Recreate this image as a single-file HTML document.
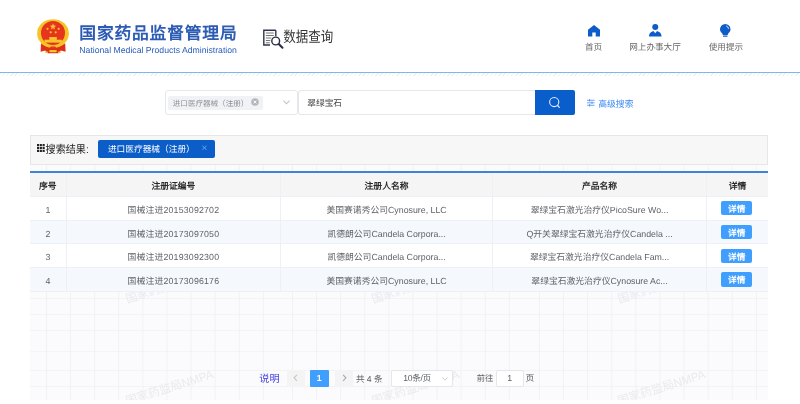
<!DOCTYPE html>
<html lang="zh-CN">
<head>
<meta charset="utf-8">
<title>数据查询</title>
<style>
*{box-sizing:border-box;margin:0;padding:0}
html,body{width:800px;height:404px;overflow:hidden;background:#fff}
body{font-family:"Liberation Sans",sans-serif;color:#606266;position:relative;will-change:transform;background:transparent;text-rendering:geometricPrecision;-webkit-font-smoothing:antialiased}
.abs{position:absolute}
.t{position:absolute;white-space:nowrap;line-height:1}
/* header */
#hline{left:0;top:71.7px;width:800px;height:1.6px;background:#86b3e6}
#hhatch{left:0;top:73.3px;width:800px;height:2.4px;background:repeating-linear-gradient(135deg,#edf0f5 0 1px,#fff 1px 3px)}
#title{left:79.3px;top:25.5px;font-size:16.8px;font-weight:bold;color:#2d5cb5;letter-spacing:.8px}
#sub{left:79.3px;top:46px;font-size:8.68px;color:#2a5cba}
#dq{left:283.3px;top:31.4px;font-size:12.5px;color:#333;transform:scaleY(1.2);transform-origin:0 50%}
.nav{font-size:8.6px;color:#666;text-align:center;transform:translateX(-50%)}
/* search */
#sel{left:164.7px;top:90.4px;width:133.1px;height:24.4px;border:1px solid #e6e7ec;border-radius:3px;background:#fff}
#seltag{left:168px;top:95.6px;width:94.5px;height:14.4px;background:#f1f2f5;border-radius:2px}
#seltxt{left:172.8px;top:99.5px;font-size:7.55px;color:#8e9196}
#inp{left:298.2px;top:90.4px;width:238px;height:24.4px;border:1px solid #e6e7ec;border-right:0;border-radius:3px 0 0 3px;background:#fff}
#inptxt{left:307.3px;top:98.5px;font-size:8.7px;color:#444}
#btn{left:535px;top:90.4px;width:39.8px;height:24.4px;background:#0a5ecb;border-radius:0 2px 2px 0}
#adv{left:598.2px;top:99.7px;font-size:8.85px;color:#3a88f5}
/* result bar */
#rbar{left:29.8px;top:134.7px;width:738.4px;height:30.7px;background:#f7f7f7;border:1px solid #e6e6e6}
#rlabel{left:45.6px;top:145.6px;font-size:10.1px;color:#222;transform:scaleY(1.08);transform-origin:0 50%}
#rtag{left:98.2px;top:139.6px;width:117.3px;height:18.5px;background:#0b5dc8;border-radius:2px}
#rtagtxt{left:107.9px;top:145px;font-size:8.7px;color:#fff}
#rtagx{left:201.4px;top:143.6px;font-size:10px;color:#62a5f7}
/* grid bg */
#grid{left:29.7px;top:165px;width:738.4px;height:235px;background-color:#fbfbfe;
background-image:linear-gradient(to bottom,transparent 132.5px,#f3f2f5 132.5px,#f3f2f5 133.5px,transparent 133.5px,transparent 148.8px,#f3f2f5 148.8px,#f3f2f5 149.8px,transparent 149.8px,transparent 165px,#f3f2f5 165px,#f3f2f5 166px,transparent 166px,transparent 186px,#f5f4f7 186px,#f5f4f7 187px,transparent 187px,transparent 204.700px,#f3f2f5 204.700px,#f3f2f5 205.700px,transparent 205.700px,transparent 221px,#f3f2f5 221px,#f3f2f5 222px,transparent 222px);overflow:hidden}
.vt{position:absolute;top:0;height:235px;width:218px;background-image:linear-gradient(to right,#f1f0f3 1px,transparent 1px);background-size:24.1px 100%}
.wm{position:absolute;white-space:nowrap;font-size:11.7px;color:#eaeaee;transform:rotate(-17.5deg);transform-origin:0 100%;line-height:1}
/* table */
#tblue{left:30px;top:171px;width:738px;height:2px;background:#3f83d8}
.row{position:absolute;left:29.7px;width:738.4px;height:23.8px;border-bottom:1px solid #eef0f6}
.cell{position:absolute;top:0;height:100%;text-align:center;font-size:8.8px;line-height:26.2px;white-space:nowrap;border-right:1px solid #eef0f6;color:#606266}
.c1{left:0;width:37.3px}.c2{left:37.3px;width:213.9px}.c3{left:251.2px;width:212.4px}.c4{left:463.6px;width:213.5px}.c5{left:677.1px;width:61.3px;border-right:0}
.row:not(.hd) .c2{letter-spacing:.18px}
.hd{background:#f5f5f5}
.hd .cell{font-weight:bold;color:#2a2a2a;line-height:26.3px;letter-spacing:0}
.odd{background:#fff}.even{background:#f5f8fd}
.dbtn{position:absolute;left:14.4px;top:4.2px;width:31px;height:14.5px;background:#409eff;border-radius:2px;color:#fff;font-size:8.7px;font-weight:bold;line-height:16.2px;text-align:center;letter-spacing:0}
/* pagination */
.pb{position:absolute;top:369.6px;height:17px;border-radius:1px}
</style>
</head>
<body>
<!-- header -->
<div class="abs" id="hline"></div>
<div class="abs" id="hhatch"></div>
<svg class="abs" id="emblem" style="left:36px;top:18px" width="34" height="37" viewBox="0 0 34 37">
  <path d="M5 25.500L4.600 33.800 9.300 32.600 11.500 35.200 22.500 35.200 24.700 32.600 29.600 33.800 29.200 25.500Z" fill="#df2e1b"/>
  <ellipse cx="17" cy="15.400" rx="15.900" ry="14.200" fill="#f6c426"/>
  <circle cx="17" cy="14.900" r="12" fill="#e6341d"/>
  <path d="M17 5.300l.9 2.300 2.400.1-1.900 1.500.7 2.400-2.100-1.400-2.100 1.400.7-2.400-1.900-1.500 2.400-.1z" fill="#f7c52b"/>
  <circle cx="11.500" cy="10.800" r="1.100" fill="#f7c52b"/><circle cx="22.700" cy="10.800" r="1.100" fill="#f7c52b"/>
  <circle cx="14.700" cy="14.300" r="1.100" fill="#f7c52b"/><circle cx="19.700" cy="14.300" r="1.100" fill="#f7c52b"/>
  <rect x="13.300" y="19" width="7.500" height="3.400" fill="#f7c52b"/>
  <rect x="8.400" y="21.700" width="17.500" height="2.900" fill="#f7c52b"/>
  <path d="M4.500 22.500Q17 32.500 29.500 22.500L28.500 26Q17 34 5.500 26Z" fill="#f6c426"/>
  <path d="M13.500 29.200Q17 27.400 20.500 29.200L20 30.600Q17 29.400 14 30.600Z" fill="#e2401c"/>
  <rect x="13.300" y="32" width="7.400" height="2.200" rx=".8" fill="#f6c426"/>
  <rect x="9" y="33.600" width="3" height="1.300" fill="#f6c426"/><rect x="22" y="33.600" width="3" height="1.300" fill="#f6c426"/>
</svg>
<div class="t" id="title">国家药品监督管理局</div>
<div class="t" id="sub">National Medical Products Administration</div>
<svg class="abs" style="left:262px;top:28px" width="23" height="22" viewBox="0 0 23 22">
  <path d="M13.800 2.200H1.800v14.800H8" fill="none" stroke="#33334d" stroke-width="1.400"/>
  <path d="M13.800 2.200v6" fill="none" stroke="#33334d" stroke-width="1.400"/>
  <path d="M3.800 5h8M3.800 7.500h8M3.800 10h5.500M3.800 12.500h4.500M3.800 14.800h4" stroke="#777" stroke-width="1"/>
  <circle cx="13.700" cy="13" r="3.900" fill="#fff" stroke="#2b2b45" stroke-width="1.400"/>
  <path d="M16.700 16L20.500 19.800" stroke="#2b2b45" stroke-width="2" stroke-linecap="round"/>
</svg>
<div class="t" id="dq">数据查询</div>
<!-- nav -->
<svg class="abs" style="left:587.5px;top:25px" width="12" height="11.500" viewBox="0 0 12 11.500"><path d="M6 0L0 4.800V11.500H4.300V7.500H7.700V11.500H12V4.800Z" fill="#0d5cc9"/></svg>
<svg class="abs" style="left:649.2px;top:24.300px" width="12.500" height="12.500" viewBox="0 0 12.500 12.500"><circle cx="6.250" cy="3" r="3" fill="#0d5cc9"/><path d="M0 12.500C0 8.500 3 7 6.250 7S12.500 8.500 12.500 12.500Z" fill="#0d5cc9"/><path d="M4.500 7L6.250 9.200 8 7Z" fill="#fff"/></svg>
<svg class="abs" style="left:720px;top:24px" width="10.500" height="13.500" viewBox="0 0 10.500 13.500"><path d="M5.250 0A5.250 5.250 0 0 0 0 5.250C0 7.300 1.200 8.600 2.300 9.600L2.800 11H7.700L8.200 9.600C9.300 8.600 10.500 7.300 10.500 5.250A5.250 5.250 0 0 0 5.250 0Z" fill="#0d5cc9"/><rect x="3" y="11.600" width="4.500" height="1.200" rx=".5" fill="#0d5cc9"/><path d="M6.500 2A3 3 0 0 1 8.500 4.500" fill="none" stroke="#fff" stroke-width=".8" stroke-linecap="round"/></svg>
<div class="t nav" style="left:593.5px;top:43.400px">首页</div>
<div class="t nav" style="left:655px;top:43.400px">网上办事大厅</div>
<div class="t nav" style="left:725.900px;top:43.400px">使用提示</div>
<!-- search -->
<div class="abs" id="sel"></div>
<div class="abs" id="seltag"></div>
<div class="t" id="seltxt">进口医疗器械（注册）</div>
<svg class="abs" style="left:251.400px;top:98px" width="8" height="8" viewBox="0 0 8 8"><circle cx="4" cy="4" r="3.800" fill="#b4b7bd"/><path d="M2.600 2.600l2.800 2.800M5.400 2.600L2.600 5.400" stroke="#fff" stroke-width=".9"/></svg>
<svg class="abs" style="left:283.200px;top:100.200px" width="7" height="4.500" viewBox="0 0 7 4.500"><path d="M.4.600L3.500 3.800 6.600.6" fill="none" stroke="#bfc3cb" stroke-width="1.100"/></svg>
<div class="abs" id="inp"></div>
<div class="t" id="inptxt">翠绿宝石</div>
<div class="abs" id="btn"></div>
<svg class="abs" style="left:547px;top:95px" width="15" height="15" viewBox="0 0 15 15"><circle cx="7.200" cy="7" r="4.600" fill="none" stroke="#eaf1ff" stroke-width="1.050"/><path d="M10.600 10.500L12.300 12.300" stroke="#eaf1ff" stroke-width="1.200" stroke-linecap="round"/></svg>
<svg class="abs" style="left:587.400px;top:99.300px" width="7.600" height="7.600" viewBox="0 0 7.600 7.600"><path d="M0 1.300h7.600M0 3.800h7.600M0 6.300h7.600" stroke="#4a93f5" stroke-width=".8"/><path d="M2.600 0v2.600M5 2.500v2.600M2.600 5v2.600" stroke="#4a93f5" stroke-width=".9"/></svg>
<div class="t" id="adv">高级搜索</div>
<!-- results bar -->
<div class="abs" id="grid">
  <div class="vt" style="left:16.600px"></div><div class="vt" style="left:262.800px"></div><div class="vt" style="left:508.900px"></div>
  <div class="wm" style="left:98.3px;top:129px">国家药监局NMPA</div>
  <div class="wm" style="left:344.8px;top:129px">国家药监局NMPA</div>
  <div class="wm" style="left:590.3px;top:129px">国家药监局NMPA</div>
  <div class="wm" style="left:98.3px;top:230.500px">国家药监局NMPA</div>
  <div class="wm" style="left:344.8px;top:230.500px">国家药监局NMPA</div>
  <div class="wm" style="left:590.3px;top:230.500px">国家药监局NMPA</div>
</div>
<div class="abs" id="rbar"></div>
<svg class="abs" style="left:37px;top:143.700px" width="7.700" height="8.200" viewBox="0 0 8 8.500"><g fill="#222"><rect x="0" y="0" width="2.200" height="2.300"/><rect x="2.900" y="0" width="2.200" height="2.300"/><rect x="5.800" y="0" width="2.200" height="2.300"/><rect x="0" y="3.100" width="2.200" height="2.300"/><rect x="2.900" y="3.100" width="2.200" height="2.300"/><rect x="5.800" y="3.100" width="2.200" height="2.300"/><rect x="0" y="6.200" width="2.200" height="2.300"/><rect x="2.900" y="6.200" width="2.200" height="2.300"/><rect x="5.800" y="6.200" width="2.200" height="2.300"/></g></svg>
<div class="t" id="rlabel">搜索结果:</div>
<div class="abs" id="rtag"></div>
<div class="t" id="rtagtxt">进口医疗器械（注册）</div>
<div class="t" id="rtagx">×</div>
<!-- table -->
<div class="abs" id="tblue"></div>
<div class="row hd" style="top:173px;height:23.8px"><div class="cell c1">序号</div><div class="cell c2">注册证编号</div><div class="cell c3">注册人名称</div><div class="cell c4">产品名称</div><div class="cell c5">详情</div></div>
<div class="row odd" style="top:196.8px"><div class="cell c1">1</div><div class="cell c2">国械注进20153092702</div><div class="cell c3">美国赛诺秀公司Cynosure, LLC</div><div class="cell c4">翠绿宝石激光治疗仪PicoSure Wo...</div><div class="cell c5"><div class="dbtn">详情</div></div></div>
<div class="row even" style="top:220.6px"><div class="cell c1">2</div><div class="cell c2">国械注进20173097050</div><div class="cell c3">凯德朗公司Candela Corpora...</div><div class="cell c4">Q开关翠绿宝石激光治疗仪Candela ...</div><div class="cell c5"><div class="dbtn">详情</div></div></div>
<div class="row odd" style="top:244.4px"><div class="cell c1">3</div><div class="cell c2">国械注进20193092300</div><div class="cell c3">凯德朗公司Candela Corpora...</div><div class="cell c4">翠绿宝石激光治疗仪Candela Fam...</div><div class="cell c5"><div class="dbtn">详情</div></div></div>
<div class="row even" style="top:268.2px"><div class="cell c1">4</div><div class="cell c2">国械注进20173096176</div><div class="cell c3">美国赛诺秀公司Cynosure, LLC</div><div class="cell c4">翠绿宝石激光治疗仪Cynosure Ac...</div><div class="cell c5"><div class="dbtn">详情</div></div></div>
<!-- pagination -->
<div class="t" style="left:259.300px;top:374.900px;font-size:10.200px;color:#433fe0">说明</div>
<div class="pb" style="left:286.500px;width:18px;background:#f4f4f5"></div>
<svg class="abs" style="left:292.500px;top:374.300px" width="5" height="7.600" viewBox="0 0 5 7.600"><path d="M3.900.8L1.100 3.800 3.900 6.800" fill="none" stroke="#c0c4cc" stroke-width="1.100"/></svg>
<div class="pb" style="left:310px;width:18.500px;background:#409eff;color:#fff;font-size:8.750px;font-weight:bold;text-align:center;line-height:17.400px">1</div>
<div class="pb" style="left:335px;width:17.500px;background:#f4f4f5"></div>
<svg class="abs" style="left:341.600px;top:374.300px" width="5" height="7.600" viewBox="0 0 5 7.600"><path d="M1.100.8L3.900 3.800 1.100 6.800" fill="none" stroke="#a4a8b0" stroke-width="1.100"/></svg>
<div class="t" style="left:355.900px;top:374.500px;font-size:8.600px;color:#606266">共 4 条</div>
<div class="pb" style="left:391.300px;width:61.500px;height:17.200px;background:#fff;border:1px solid #e4e6ec;border-radius:2px"></div>
<div class="t" style="left:403.200px;top:374.300px;font-size:8.600px;letter-spacing:-.3px;color:#606266">10条/页</div>
<svg class="abs" style="left:442px;top:376.500px" width="6" height="4" viewBox="0 0 6 4"><path d="M.5.500L3 3.200 5.500.5" fill="none" stroke="#c0c4cc" stroke-width=".8"/></svg>
<div class="t" style="left:476.800px;top:374px;font-size:8.300px;color:#606266">前往</div>
<div class="pb" style="left:496px;width:27.600px;height:17px;background:#fff;border:1px solid #e4e6ec;border-radius:2px;text-align:center;font-size:8.750px;line-height:15px;color:#606266">1</div>
<div class="t" style="left:525.600px;top:374px;font-size:8.750px;color:#606266">页</div>
</body>
</html>
